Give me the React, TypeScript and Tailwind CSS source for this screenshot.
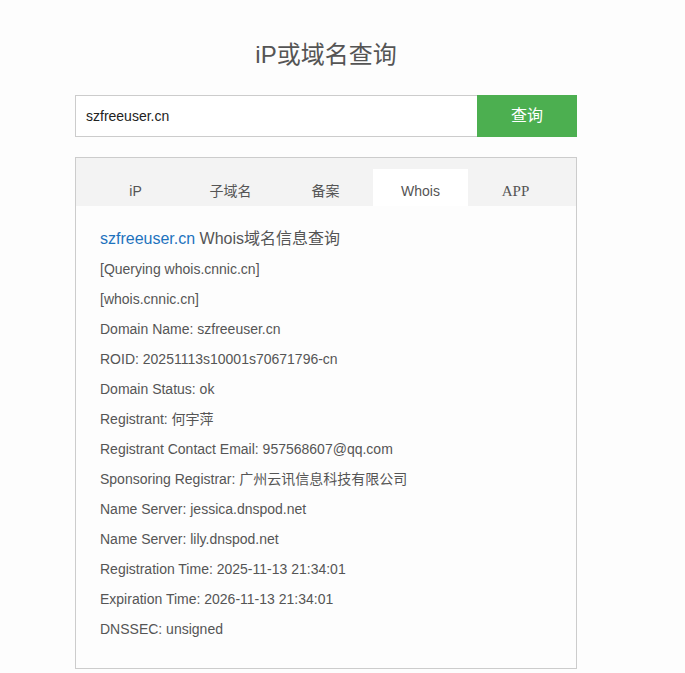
const lines = [
  "[Querying whois.cnnic.cn]",
  "[whois.cnnic.cn]",
  "Domain Name: szfreeuser.cn",
  "ROID: 20251113s10001s70671796-cn",
  "Domain Status: ok",
  "Registrant: 何宇萍",
  "Registrant Contact Email: 957568607@qq.com",
  "Sponsoring Registrar: 广州云讯信息科技有限公司",
  "Name Server: jessica.dnspod.net",
  "Name Server: lily.dnspod.net",
  "Registration Time: 2025-11-13 21:34:01",
  "Expiration Time: 2026-11-13 21:34:01",
  "DNSSEC: unsigned",
];

const tabs = [
  { label: "iP", cls: "text-[14px]" },
  { label: "子域名", cls: "text-[14px]" },
  { label: "备案", cls: "text-[14px]" },
  { label: "Whois", cls: "text-[14px] bg-white" },
  { label: "APP", cls: "text-[15px] font-['Liberation_Serif',serif]" },
];

export default function App() {
  return (
    <div className="min-h-screen bg-[#fdfdfd] pt-[38px] font-['Liberation_Sans','Noto_Sans_CJK_SC',sans-serif]">
      <div className="ml-[75px] w-[502px]">
        <h1 className="text-center text-[24px] leading-[34px] text-[#555]">iP或域名查询</h1>

        <div className="mt-[23px] flex h-[42px]">
          <div className="flex flex-1 items-center border border-r-0 border-[#ccc] bg-white pl-[10px] text-[14px] text-[#222]">
            szfreeuser.cn
          </div>
          <button className="w-[100px] bg-[#4caf50] text-[16px] text-white">查询</button>
        </div>

        <div className="mt-[20px] border border-[#ccc] bg-[#fdfdfd]">
          <div className="flex bg-[#f3f3f3] pl-[12px] pt-[11px]">
            {tabs.map((t) => (
              <div
                key={t.label}
                className={
                  "flex h-[37px] w-[95px] items-center justify-center pt-[8px] text-[#555] " + t.cls
                }
              >
                {t.label}
              </div>
            ))}
          </div>

          <div className="pb-[24px] pl-[24px] pt-[18px]">
            <div className="text-[16px] leading-[30px] text-[#555]">
              <span className="text-[#1e73be]">szfreeuser.cn</span> Whois域名信息查询
            </div>
            {lines.map((l, i) => (
              <div key={i} className="text-[14px] leading-[30px] text-[#555]">
                {l}
              </div>
            ))}
          </div>
        </div>
      </div>
    </div>
  );
}
